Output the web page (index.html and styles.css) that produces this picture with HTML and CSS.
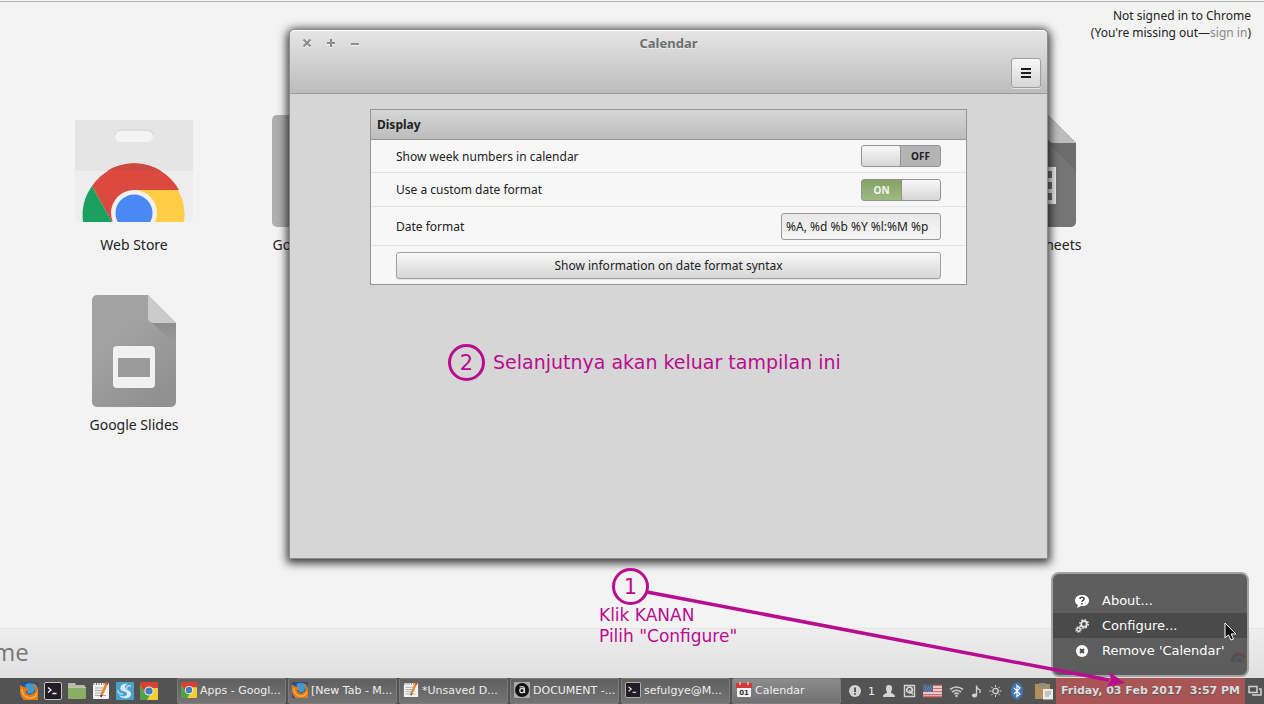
FILE: index.html
```html
<!DOCTYPE html>
<html lang="en">

<head>
  <meta charset="UTF-8">
  <meta name="viewport" content="width=device-width, initial-scale=1.0">
  <title>Calendar</title>
  <link rel="stylesheet" href="styles.css">
</head>

<body>
  <!-- shared icons -->
  <svg class="defs" width="0" height="0">
    <symbol id="chrome" viewBox="0 0 18 18">
      <rect width="18" height="18" rx="1" fill="#f3cf35" />
      <path d="M0 0h18v6H9L5 11 0 3z" fill="#d8402f" />
      <path d="M0 3l5 8 5 2-3 5H0z" fill="#4fa347" />
      <circle cx="9" cy="9" r="4.600" fill="#f2f2f2" />
      <circle cx="9" cy="9" r="3.600" fill="#3d7fc4" />
    </symbol>
    <symbol id="firefox" viewBox="0 0 18 18">
      <rect width="18" height="18" rx="1" fill="#2b4f86" />
      <path d="M5 3c3-3 9-2 11 2l-3 6-5 1z" fill="#3d9bd4" />
      <path d="M0 3l4 2 3 1 2 2-3 1c0 3 3 5 6 3 3-1 4-4 3-7-1-2-2-3-3-4 4 1 6 4 6 7v10H4C1 16 0 12 0 9z" fill="#e57a1d" />
      <path d="M2 7c0 5 3 9 8 9 3 0 6-2 7-5" fill="none" stroke="#f6b43a" stroke-width="1.500" />
    </symbol>
    <symbol id="terminal" viewBox="0 0 18 18">
      <rect x=".5" y=".5" width="17" height="17" rx="1.500" fill="#211c28" stroke="#c4c4c4" />
      <path d="M4 5.500l3 2.500-3 2.500M8.500 11.500h4" fill="none" stroke="#fff" stroke-width="1.300" />
    </symbol>
    <symbol id="notes" viewBox="0 0 18 18">
      <rect x="1" y="1" width="16" height="16" rx="1" fill="#f3f3f1" />
      <path d="M2 1v2M4.500 1v2M7 1v2M9.500 1v2M12 1v2M14.500 1v2" stroke="#777" />
      <path d="M3 6h10M3 8.500h7M3 11h7M3 13.500h11" stroke="#a8a8a8" />
      <path d="M15 1L9.500 13" stroke="#e8832a" stroke-width="2.600" />
      <path d="M9.500 13l-.5 2" stroke="#333" stroke-width="1.500" />
      <path d="M15.500 0l-1 2.500" stroke="#d94040" stroke-width="2.600" />
    </symbol>
  </svg>

  <!-- new tab page -->
  <main class="newtab">
    <div class="signin">
      <p>Not signed in to Chrome</p>
      <p>(You're missing out—<a href="#">sign in</a>)</p>
    </div>

    <div class="apps">
      <a class="app" href="#">
        <svg width="118" height="112" viewBox="0 0 118 112">
          <path d="M0 5h118v97a5 5 0 0 1-5 5H5a5 5 0 0 1-5-5z" fill="#eeeeee" />
          <path d="M0 5h118v51H0z" fill="#e5e5e5" />
          <rect x="40" y="16" width="38" height="11" rx="5.500" fill="#f4f4f4" />
          <path d="M40 20q1-5 6-5h26q5 0 6 5" fill="none" stroke="#d4d4d4" />
          <clipPath id="bag"><rect y="5" width="118" height="102" /></clipPath>
          <g clip-path="url(#bag)">
            <path d="M17 71A51 51 0 0 1 104 75H59L37 107z" fill="#dc4a3f" />
            <path d="M17 71a51 51 0 0 0-9 36h29z" fill="#1aa15f" />
            <path d="M103 75H59v32h50a51 51 0 0 0-6-32z" fill="#ffce45" />
            <path d="M32 56a51 51 0 0 1 54 0z" fill="#ce4a40" />
            <circle cx="59" cy="98" r="23" fill="#f1f1f1" />
            <circle cx="59" cy="98" r="18.500" fill="#4889f4" />
          </g>
        </svg>
        <span>Web Store</span>
      </a>
      <a class="app" href="#">
        <svg width="84" height="112" viewBox="0 0 84 112">
          <path d="M5 0h51l28 28v79a5 5 0 0 1-5 5H5a5 5 0 0 1-5-5V5a5 5 0 0 1 5-5z" fill="#aeaeae" />
        </svg>
        <span>Google Docs</span>
      </a>
      <a class="app app-sheets" href="#">
        <svg width="84" height="112" viewBox="0 0 84 112">
          <path d="M5 0h51l28 28v79a5 5 0 0 1-5 5H5a5 5 0 0 1-5-5V5a5 5 0 0 1 5-5z" fill="#757575" />
          <path d="M56 28h28v28z" fill="#6c6c6c" />
          <path d="M56 0l28 28H61a5 5 0 0 1-5-5z" fill="#bdbdbd" />
          <path d="M20 52h44v37H20z" fill="#f1f1f1" />
          <path d="M25 56h14v7H25zM45 56h15v7H45zM25 67h14v7H25zM45 67h15v7H45zM25 78h14v7H25zM45 78h15v7H45z" fill="#757575" />
        </svg>
        <span>Google Sheets</span>
      </a>
      <a class="app app-slides" href="#">
        <svg width="84" height="112" viewBox="0 0 84 112">
          <linearGradient id="page" x2=".6" y2="1">
            <stop offset=".4" stop-color="#a2a2a2" />
            <stop offset="1" stop-color="#919191" />
          </linearGradient>
          <linearGradient id="fold" x2="0" y2="1">
            <stop stop-color="#8c8c8c" />
            <stop offset="1" stop-color="#9c9c9c" />
          </linearGradient>
          <path d="M5 0h51l28 28v79a5 5 0 0 1-5 5H5a5 5 0 0 1-5-5V5a5 5 0 0 1 5-5z" fill="url(#page)" />
          <path d="M59 27l25 23V28z" fill="url(#fold)" />
          <path d="M56 0l28 28H61a5 5 0 0 1-5-5z" fill="#cbcbcb" />
          <rect x="21" y="51" width="42" height="42" rx="4" fill="#f1f1f1" />
          <rect x="26" y="63" width="32" height="19" fill="#9b9b9b" />
        </svg>
        <span>Google Slides</span>
      </a>
    </div>

    <footer class="footer">
      <span class="brand">Chrome</span>
      <a class="store" href="#" aria-label="Web Store">
        <svg width="18" height="12" viewBox="0 0 18 12">
          <path d="M1 12a8 8 0 0 1 15-5H9l-4 5z" fill="#dc4a3f" />
          <path d="M1 12q0-4 2-6l3 6z" fill="#1aa15f" />
          <path d="M9 7h7q1 2 1 5H9z" fill="#ffce45" />
          <circle cx="9" cy="10" r="4" fill="#f1f1f1" />
          <circle cx="9" cy="10" r="3" fill="#4889f4" />
        </svg>
      </a>
    </footer>
  </main>

  <!-- calendar settings window -->
  <section class="window">
    <header class="titlebar">
      <div class="controls">
        <button aria-label="Close"><svg width="10" height="10" viewBox="0 0 10 10"><path d="M1.500 1.500l7 7M8.500 1.500l-7 7" /></svg></button>
        <button aria-label="Maximize"><svg width="10" height="10" viewBox="0 0 10 10"><path d="M5 1v8M1 5h8" /></svg></button>
        <button aria-label="Minimize"><svg width="10" height="10" viewBox="0 0 10 10"><path d="M1 6h8" /></svg></button>
      </div>
      <h1>Calendar</h1>
      <button class="menu-button" aria-label="Menu">
        <svg width="10" height="10" viewBox="0 0 10 10"><path d="M0 1h10M0 5h10M0 9h10" stroke="#1c1c1c" stroke-width="2" /></svg>
      </button>
    </header>

    <div class="panel">
      <h2>Display</h2>
      <div class="row">
        <label for="weeks">Show week numbers in calendar</label>
        <label class="switch off"><input type="checkbox" id="weeks"><span>OFF</span></label>
      </div>
      <div class="row">
        <label for="custom">Use a custom date format</label>
        <label class="switch on"><span>ON</span><input type="checkbox" id="custom" checked></label>
      </div>
      <div class="row row-tall">
        <label for="format">Date format</label>
        <input class="text" type="text" id="format" value="%A, %d %b %Y %l:%M %p">
      </div>
      <div class="row row-tall">
        <button class="info">Show information on date format syntax</button>
      </div>
    </div>

    <div class="note note-two">
      <span class="number">2</span>
      <p>Selanjutnya akan keluar tampilan ini</p>
    </div>
  </section>

  <!-- applet context menu -->
  <div class="menu">
    <button>
      <svg width="14" height="14" viewBox="0 0 14 14">
        <path d="M7 1C3 1 0 3 0 6.500c0 2 1 3.500 3 4.500l-1 3 4-2c5 .5 8-2 8-5.500S11 1 7 1z" fill="#fff" />
        <path d="M5 5c0-2.500 4-2.500 4 0 0 1.500-2 1.200-2 3M7 9v1.400" fill="none" stroke="#444" stroke-width="1.500" />
      </svg>
      About...
    </button>
    <button class="active">
      <svg width="14" height="14" viewBox="0 0 14 14" fill="none" stroke="#e8e8e8">
        <circle cx="9" cy="5" r="2.800" stroke-width="1.800" />
        <circle cx="9" cy="5" r="4.200" stroke-width="1.500" stroke-dasharray="1.600 1.700" />
        <circle cx="3.500" cy="10.500" r="1.700" stroke-width="1.400" />
        <circle cx="3.500" cy="10.500" r="2.700" stroke-width="1.200" stroke-dasharray="1.100 1.030" />
      </svg>
      Configure...
    </button>
    <button>
      <svg width="14" height="14" viewBox="0 0 14 14">
        <circle cx="7" cy="7" r="6" fill="#fff" />
        <path d="M5 5l4 4M9 5l-4 4" stroke="#4a4a4a" stroke-width="2" />
      </svg>
      Remove 'Calendar'
    </button>
    <svg class="cursor" width="13" height="19" viewBox="0 0 13 19">
      <path d="M1 1v15l3.500-3 2.500 5 2.500-1-2.300-5H12z" fill="#111" stroke="#fff" />
    </svg>
  </div>

  <!-- taskbar -->
  <nav class="taskbar">
    <div class="launchers">
      <button aria-label="Firefox"><svg width="18" height="18"><use href="#firefox" /></svg></button>
      <button aria-label="Terminal"><svg width="18" height="18"><use href="#terminal" /></svg></button>
      <button aria-label="Files">
        <svg width="18" height="18" viewBox="0 0 18 18">
          <path d="M0 2q0-1 1-1h6l1 2h8q1 0 1 1v5H0z" fill="#b9b9b0" />
          <path d="M0 5h18v11q0 1-1 1H1q-1 0-1-1z" fill="#8aae65" />
          <path d="M0 5.500h18" stroke="#b5ce96" />
        </svg>
      </button>
      <button aria-label="Text editor"><svg width="18" height="18"><use href="#notes" /></svg></button>
      <button aria-label="Shutter">
        <svg width="18" height="18" viewBox="0 0 18 18">
          <rect width="18" height="18" rx="1" fill="#4aa2cc" />
          <path d="M12 2C6 1 3 5 5 8c2 2 6 1 6 4 0 3-5 3-8 1 3 5 12 4 12-1 0-4-6-4-6-7 0-2 2-3 3-3z" fill="#d9ecf5" />
          <path d="M15 4c-3-1-5 1-4 3M2 8c-1 3 2 4 5 4" fill="none" stroke="#b4d8ea" stroke-width="1.500" />
        </svg>
      </button>
      <button aria-label="Chrome"><svg width="18" height="18"><use href="#chrome" /></svg></button>
    </div>

    <div class="tasks">
      <button><svg width="16" height="16"><use href="#chrome" /></svg>Apps - Googl...</button>
      <button><svg width="16" height="16"><use href="#firefox" /></svg>[New Tab - M...</button>
      <button><svg width="16" height="16"><use href="#notes" /></svg>*Unsaved D...</button>
      <button>
        <svg width="16" height="16" viewBox="0 0 16 16">
          <rect width="16" height="16" rx="1" fill="#aaa" />
          <circle cx="8" cy="8" r="7" fill="#111" />
          <circle cx="8" cy="8.500" r="2.200" fill="none" stroke="#ddd" stroke-width="1.300" />
          <path d="M5.500 5q5-1.500 5 2v4" fill="none" stroke="#ddd" stroke-width="1.200" />
        </svg>DOCUMENT -...
      </button>
      <button><svg width="16" height="16"><use href="#terminal" /></svg>sefulgye@M...</button>
      <button class="current">
        <svg width="16" height="16" viewBox="0 0 16 16">
          <rect x="1" y="1" width="14" height="14" rx="1" fill="#f4f4f4" />
          <path d="M0 1h16v5H0z" fill="#d43a3a" />
          <path d="M4 0v3M12 0v3" stroke="#eee" />
          <text x="8" y="13" text-anchor="middle">01</text>
        </svg>Calendar
      </button>
    </div>

    <div class="tray">
      <svg width="12" height="12" viewBox="0 0 12 12"><circle cx="6" cy="6" r="6" fill="#d3d3d3" /><path d="M6 2.500v4.500M6 8.200v1.600" stroke="#555" stroke-width="2" /></svg>
      <span>1</span>
      <svg width="14" height="14" viewBox="0 0 14 14"><path d="M7 1C4.500 1 3.500 3 4 5.500c.3 1.500 1 2 1 3C4 10 1 9.500 1 13h12c0-3.500-3-3-4-4.500 0-1 .7-1.500 1-3C10.500 3 9.500 1 7 1z" fill="#d3d3d3" /></svg>
      <svg width="13" height="14" viewBox="0 0 13 14"><path d="M1.500 1.500h10v11h-10z" fill="none" stroke="#d3d3d3" stroke-width="1.400" /><circle cx="6.500" cy="6" r="2.800" fill="none" stroke="#d3d3d3" stroke-width="1.800" /><path d="M6 6l4 4.500" stroke="#d3d3d3" stroke-width="1.500" /></svg>
      <svg width="19" height="14" viewBox="0 0 19 14">
        <path d="M0 1h19v12H0z" fill="#eee" />
        <path d="M0 1.500h19M0 4.500h19M0 7.500h19M0 10.500h19M0 12.500h19" stroke="#d46a6a" stroke-width="1.400" />
        <path d="M0 1h10v7H0z" fill="#4e6594" />
        <path d="M1 3h8M2 5h7M1 7h8" stroke="#8b9abb" stroke-dasharray="1 1" />
      </svg>
      <svg width="15" height="14" viewBox="0 0 15 14"><g fill="none" stroke="#c8c8c8" stroke-width="1.600"><path d="M1 5.500q6.500-5 13 0M3 8q4.500-3.500 9 0M5.200 10q2.300-1.800 4.600 0" /></g><circle cx="7.500" cy="12" r="1.200" fill="#c8c8c8" /></svg>
      <svg width="11" height="14" viewBox="0 0 11 14"><path d="M5.500 11V1.500q0 3 3.500 4.500v3" fill="none" stroke="#d3d3d3" stroke-width="1.300" /><ellipse cx="3.500" cy="11.500" rx="2.600" ry="1.900" fill="#d3d3d3" /></svg>
      <svg width="13" height="14" viewBox="0 0 13 14" fill="none" stroke="#d3d3d3"><circle cx="6.500" cy="7" r="2.700" stroke-width="1.300" /><path d="M6.500 1v2M6.500 11v2M.5 7h2M10.500 7h2M2.300 2.800l1.400 1.400M9.300 9.800l1.400 1.400M10.700 2.800L9.300 4.200M3.700 9.800l-1.400 1.400" /></svg>
      <svg width="16" height="18" viewBox="0 0 16 18"><ellipse cx="8" cy="9" rx="6" ry="8.500" fill="#3f76bd" /><path d="M5 6l6 6-3 2.500v-11L11 6l-6 6" fill="none" stroke="#fff" stroke-width="1.200" /></svg>
      <svg width="22" height="18" viewBox="0 0 22 18"><path d="M3 2h15v15H3z" fill="#b28e5d" /><path d="M7 1h7v4H7z" fill="#8d8d86" /><path d="M11 7h10v10.500H11z" fill="#ececec" /><path d="M13 10h6M13 12h6M13 14h4" stroke="#999" /></svg>
    </div>
    <button class="clock">Friday, 03 Feb 2017  3:57 PM</button>
    <button class="windows" aria-label="Window list">
      <svg width="14" height="12" viewBox="0 0 14 12"><path d="M1 1.500h8v6H1z" fill="none" stroke="#d3d3d3" stroke-width="1.500" /><path d="M11 4h2v6H5V9" fill="none" stroke="#d3d3d3" stroke-width="1.500" /></svg>
    </button>
  </nav>

  <div class="note note-one">
    <span class="number">1</span>
    <p>Klik KANAN<br>Pilih "Configure"</p>
  </div>
  <svg class="arrow" width="490" height="104" viewBox="0 0 490 104">
    <path d="M6 7l462 88" stroke="#b90d8f" stroke-width="3.500" />
    <path d="M484 98l-18 4 4-7-2-8z" fill="#b90d8f" />
  </svg>
</body>

</html>
```
FILE: styles.css
```css
* {
  margin: 0;
  padding: 0;
  box-sizing: border-box;
}

body {
  display: flex;
  flex-direction: column;
  position: relative;
  height: 100vh;
  padding-top: 1px;
  overflow: hidden;
  font-family: "Noto Sans", sans-serif;
  font-size: 12px;
  color: #222;
  background-color: #f3f3f3;
}

button,
input {
  font: inherit;
  color: inherit;
  border: none;
  background: none;
}

a {
  color: inherit;
  text-decoration: none;
}

svg {
  flex: none;
}

.defs {
  position: absolute;
}

/* new tab page */
.newtab {
  flex: 1;
  display: flex;
  flex-direction: column;
  border-top: 1px solid #b4b4b4;
}

.signin {
  height: 113px;
  padding: 5px 13px;
  text-align: right;
  line-height: 17px;
}

.signin a {
  color: #888;
}

.apps {
  flex: 1;
  display: grid;
  grid-template-columns: repeat(6, 180px);
  grid-auto-rows: 180px;
  padding-left: 44px;
}

.app {
  display: flex;
  flex-direction: column;
  align-items: center;
  gap: 8px;
  font-size: 14px;
  line-height: 20px;
}

.app-sheets {
  grid-column: 6;
}

.app-slides {
  grid-column: 1;
}

.footer {
  display: flex;
  justify-content: space-between;
  align-items: center;
  height: 50px;
  padding-right: 16px;
  border-top: 1px solid #e4e4e4;
  background-image: linear-gradient(#eeeeee, #e0e0e0);
}

.brand {
  margin-left: -61px;
  padding-bottom: 4px;
  font-family: "Open Sans", sans-serif;
  font-size: 24px;
  color: #777;
}

.store {
  padding-top: 8px;
}

/* settings window */
.window {
  position: absolute;
  top: 29px;
  left: 289px;
  width: 759px;
  height: 530px;
  border: 1px solid #8b8b8b;
  border-radius: 6px 6px 0 0;
  background-color: #d6d6d6;
  box-shadow: 0 2px 10px 2px rgba(0, 0, 0, 0.8);
}

.titlebar {
  display: grid;
  grid-template-columns: 1fr auto 1fr;
  grid-template-rows: 26px 35px;
  row-gap: 2px;
  align-items: center;
  padding: 0 6px;
  border-bottom: 1px solid #989898;
  border-radius: 5px 5px 0 0;
  background-image: linear-gradient(#e6e6e6, #bcbcbc);
  box-shadow: inset 0 1px #fff;
}

.controls {
  display: flex;
  gap: 14px;
  padding-left: 6px;
}

.controls button,
.controls svg {
  display: block;
}

.controls svg {
  fill: none;
  stroke: #8c8c8c;
  stroke-width: 2;
  filter: drop-shadow(0 1px #f4f4f4);
}

.titlebar h1 {
  font-size: 13px;
  color: #6e6e6e;
  text-shadow: 0 1px #eee;
}

.menu-button {
  grid-row: 2;
  grid-column: 3;
  justify-self: end;
  align-self: start;
  width: 30px;
  height: 30px;
}

.menu-button,
.info {
  border: 1px solid #a0a0a0;
  border-radius: 3px;
  background-image: linear-gradient(#f8f8f8, #d6d6d6);
  box-shadow: 0 1px #e4e4e4;
}

.panel {
  margin: 15px 80px 0;
  border: 1px solid #949494;
  background-color: #f7f7f7;
}

.panel h2 {
  padding-left: 6px;
  border-bottom: 1px solid #949494;
  background-image: linear-gradient(#d6d6d6, #bcbcbc);
  font-size: 12px;
  line-height: 29px;
}

.row {
  display: flex;
  justify-content: space-between;
  align-items: center;
  height: 34px;
  padding: 0 25px;
  border-bottom: 1px solid #e3e3e3;
}

.panel h2 + .row {
  height: 33px;
}

.row-tall {
  height: 39px;
}

.row:last-child {
  height: 38px;
  border-bottom: none;
}

.switch {
  display: flex;
  width: 80px;
  height: 22px;
  border: 1px solid #929292;
  border-radius: 3px;
  font-size: 10px;
  font-weight: bold;
  line-height: 20px;
  text-align: center;
}

.switch span {
  flex: 1;
}

.switch input {
  appearance: none;
  width: 39px;
  border-radius: 2px;
  background-image: linear-gradient(#f8f8f8, #d6d6d6);
}

.off {
  background-color: #b4b4b4;
}

.off input {
  border-right: 1px solid #929292;
}

.on {
  background-image: linear-gradient(#84a263, #9dbb80);
  color: #f4f4f4;
}

.on input {
  border-left: 1px solid #929292;
}

.text {
  width: 160px;
  height: 27px;
  padding: 0 4px;
  border: 1px solid #9a9a9a;
  border-radius: 3px;
  background-image: linear-gradient(#e8e8e8, #f7f7f7);
}

.info {
  flex: 1;
  height: 27px;
}

/* notes drawn over the desktop */
.note {
  position: absolute;
  font-family: "DejaVu Sans", sans-serif;
  color: #b90d8f;
}

.note-two {
  display: flex;
  align-items: center;
  gap: 8px;
  top: 314px;
  left: 158px;
  font-size: 19px;
  white-space: nowrap;
}

.note-two p {
  padding-bottom: 2px;
}

.note-one {
  top: 568px;
  left: 599px;
  font-size: 17px;
  line-height: 21px;
}

.number {
  display: block;
  width: 37px;
  height: 37px;
  border: 3px solid #b90d8f;
  border-radius: 50%;
  font-size: 21px;
  line-height: 33px;
  text-align: center;
}

.note-one .number {
  margin-left: 13px;
}

.arrow {
  position: absolute;
  top: 585px;
  left: 641px;
}

/* context menu */
.menu {
  position: absolute;
  right: 15px;
  bottom: 27px;
  width: 198px;
  padding: 14px 0 12px;
  border: 2px solid #a2a2a2;
  border-radius: 8px;
  background-color: rgba(78, 78, 78, 0.9);
  font-family: "DejaVu Sans", sans-serif;
  font-size: 13px;
  color: #fff;
}

.menu button {
  display: flex;
  align-items: center;
  gap: 13px;
  width: 100%;
  height: 25px;
  padding-left: 22px;
}

.menu .active {
  background-color: rgba(72, 72, 72, 0.9);
}

.cursor {
  position: absolute;
  top: 48px;
  right: 10px;
}

/* taskbar */
.taskbar {
  display: flex;
  align-items: center;
  height: 26px;
  background-color: #535353;
  font-family: "DejaVu Sans", sans-serif;
  font-size: 11px;
  color: #eee;
}

.launchers {
  display: flex;
  gap: 6px;
  width: 177px;
  padding-left: 20px;
}

.launchers svg {
  display: block;
}

.tasks {
  flex: 1;
  display: flex;
  gap: 2px;
  height: 26px;
}

.tasks button {
  flex: 1;
  display: flex;
  align-items: center;
  gap: 3px;
  min-width: 0;
  padding: 0 0 2px 3px;
  border: 1px solid #7d7d7d;
  border-radius: 2px;
  background-image: linear-gradient(#5f5f5f, #747474);
  white-space: nowrap;
}

.tasks .current {
  background-image: linear-gradient(#8c8c8c, #707070);
}

.tasks text {
  font-size: 7px;
  font-weight: bold;
  fill: #333;
}

.tray {
  display: flex;
  align-items: center;
  gap: 7px;
  padding: 0 2px 0 8px;
}

.clock {
  width: 189px;
  height: 26px;
  padding-bottom: 2px;
  background-color: #a95556;
  font-weight: bold;
  color: #ddd;
  text-shadow: 0 1px 1px #555;
  white-space: pre;
}

.windows {
  width: 19px;
}

.windows svg {
  display: block;
  margin: 0 auto;
}
```
